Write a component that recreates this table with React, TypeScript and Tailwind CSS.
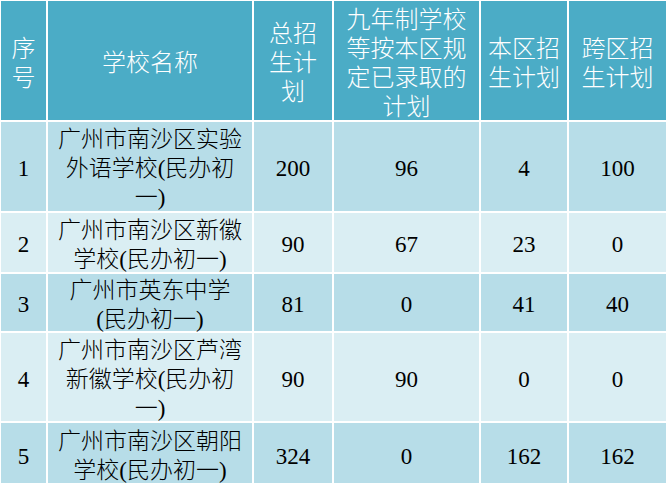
const rows = [
  { no: '1', name: ['广州市南沙区实验', '外语学校(民办初', '一)'], total: '200', done: '96', local: '4', cross: '100', h: 'h-[89px]', bg: 'bg-[#b7dde8]' },
  { no: '2', name: ['广州市南沙区新徽', '学校(民办初一)'], total: '90', done: '67', local: '23', cross: '0', h: 'h-[59px]', bg: 'bg-[#daeef3]' },
  { no: '3', name: ['广州市英东中学', '(民办初一)'], total: '81', done: '0', local: '41', cross: '40', h: 'h-[57px]', bg: 'bg-[#b7dde8]' },
  { no: '4', name: ['广州市南沙区芦湾', '新徽学校(民办初', '一)'], total: '90', done: '90', local: '0', cross: '0', h: 'h-[88px]', bg: 'bg-[#daeef3]' },
  { no: '5', name: ['广州市南沙区朝阳', '学校(民办初一)'], total: '324', done: '0', local: '162', cross: '162', h: 'h-[62px]', bg: 'bg-[#b7dde8]' },
]

const headers = [
  ['序', '号'],
  ['学校名称'],
  ['总招', '生计', '划'],
  ['九年制学校', '等按本区规', '定已录取的', '计划'],
  ['本区招', '生计划'],
  ['跨区招', '生计划'],
]

function Lines({ lines }: { lines: string[] }) {
  return (
    <>
      {lines.map((l, i) => (
        <div key={i} className="whitespace-nowrap">{l}</div>
      ))}
    </>
  )
}

export default function App() {
  return (
    <div
      className="w-[666px] h-[483px] overflow-hidden bg-white pl-px pt-px font-light"
      style={{ fontFamily: '"Liberation Serif", "Noto Sans CJK SC", serif' }}
    >
      <div className="grid grid-cols-[45px_204px_78px_145px_86px_97px] gap-[2px]">
        {/* Header */}
        {headers.map((h, i) => (
          <div
            key={i}
            className="h-[119px] pt-[6px] bg-[#4bacc6] text-white text-[24px] leading-[29px] flex flex-col items-center justify-center text-center"
          >
            <Lines lines={h} />
          </div>
        ))}

        {/* Body rows */}
        {rows.map((r) => (
          <div key={r.no} className="contents">
            {[[r.no], r.name, [r.total], [r.done], [r.local], [r.cross]].map((c, i) => (
              <div
                key={i}
                className={`${r.h} ${r.bg} pt-[4px] text-black text-[23px] leading-[29px] flex flex-col items-center justify-center text-center`}
              >
                <Lines lines={c} />
              </div>
            ))}
          </div>
        ))}
      </div>
    </div>
  )
}
